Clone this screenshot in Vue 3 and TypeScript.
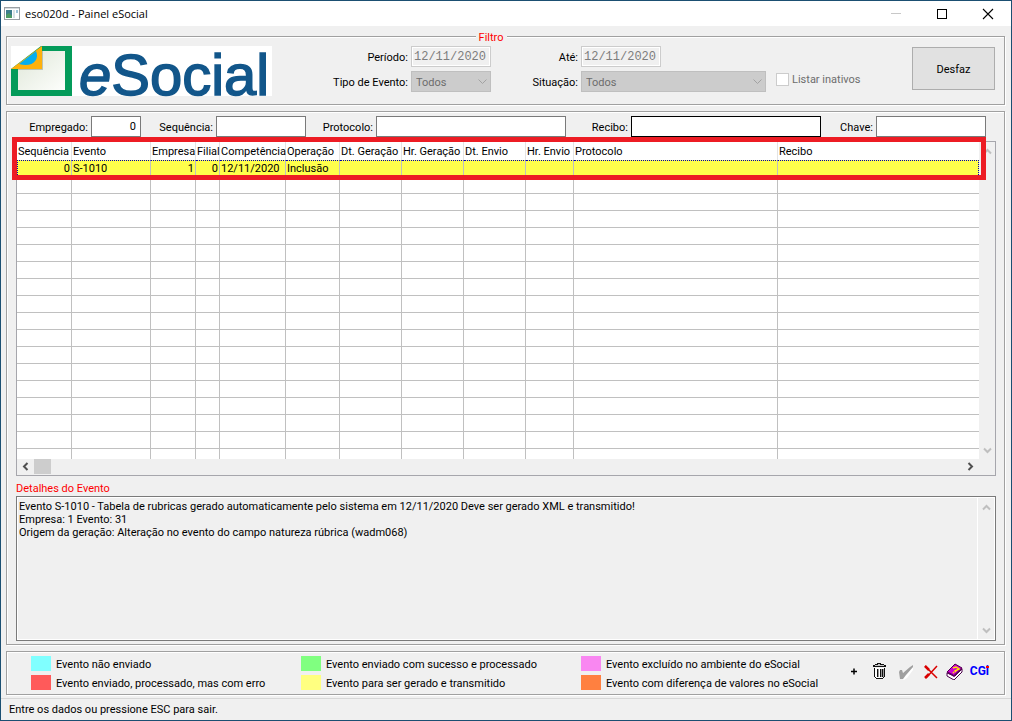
<script setup lang="ts">
import { ref } from 'vue'

interface Column {
  title: string
  width?: number
  numeric?: boolean
}

const columns: Column[] = [
  { title: 'Sequência', width: 55, numeric: true },
  { title: 'Evento', width: 79 },
  { title: 'Empresa', width: 45, numeric: true },
  { title: 'Filial', width: 24, numeric: true },
  { title: 'Competência', width: 66 },
  { title: 'Operação', width: 54 },
  { title: 'Dt. Geração', width: 62 },
  { title: 'Hr. Geração', width: 62 },
  { title: 'Dt. Envio', width: 62 },
  { title: 'Hr. Envio', width: 48 },
  { title: 'Protocolo', width: 204 },
  { title: 'Recibo' },
]

const row = ['0', 'S-1010', '1', '0', '12/11/2020', 'Inclusão', '', '', '', '', '', '']
const emptyRows = 17

const searchFields = ref([
  { id: 'empregado', label: 'Empregado:', value: '0' },
  { id: 'sequencia', label: 'Sequência:', value: '' },
  { id: 'protocolo', label: 'Protocolo:', value: '' },
  { id: 'recibo', label: 'Recibo:', value: '' },
  { id: 'chave', label: 'Chave:', value: '' },
])

const legend = [
  { name: 'cyan', text: 'Evento não enviado' },
  { name: 'green', text: 'Evento enviado com sucesso e processado' },
  { name: 'pink', text: 'Evento excluído no ambiente do eSocial' },
  { name: 'red', text: 'Evento enviado, processado, mas com erro' },
  { name: 'yellow', text: 'Evento para ser gerado e transmitido' },
  { name: 'orange', text: 'Evento com diferença de valores no eSocial' },
]

const details = `Evento S-1010 - Tabela de rubricas gerado automaticamente pelo sistema em 12/11/2020 Deve ser gerado XML e transmitido!
Empresa: 1 Evento: 31
Origem da geração: Alteração no evento do campo natureza rúbrica (wadm068)`
</script>

<template>
  <div class="window">
    <header class="titlebar">
      <svg class="app-icon" width="16" height="13" viewBox="0 0 16 13">
        <rect x="0.5" y="0.5" width="15" height="12" fill="#fff" stroke="#9a9fa3" />
        <rect x="1" y="1" width="14" height="1" fill="#d5dadd" />
        <rect x="2" y="3" width="6" height="8" fill="#3e7d8c" />
        <path d="M2 11V8l3-2 3 3v2z" fill="#4c9a62" />
        <rect x="9" y="3" width="2" height="8" fill="#d9e2e6" />
        <rect x="12" y="3" width="2" height="3" fill="#9cc4da" />
      </svg>
      <h1>eso020d - Painel eSocial</h1>
      <div class="window-buttons">
        <button type="button" aria-label="Minimizar">
          <svg width="12" height="12"><path d="M1 5.500h10" stroke="#c8c8c8" /></svg>
        </button>
        <button type="button" aria-label="Maximizar">
          <svg width="12" height="12"><rect x="1.500" y="1.500" width="9" height="9" fill="none" stroke="#000" /></svg>
        </button>
        <button type="button" aria-label="Fechar">
          <svg width="12" height="12"><path d="M1 1l10 10M11 1L1 11" stroke="#000" stroke-width="1.100" /></svg>
        </button>
      </div>
    </header>

    <main>
      <section class="panel filter" aria-labelledby="filter-title">
        <h2 id="filter-title">Filtro</h2>
        <svg class="logo" width="261" height="50" viewBox="0 0 261 50" role="img" aria-label="eSocial">
          <rect width="261" height="50" fill="#fff" />
          <defs>
            <linearGradient id="sheet" x1="0" y1="0" x2="1" y2="1">
              <stop offset="0" stop-color="#dfe7d8" />
              <stop offset="1" stop-color="#fdfefc" />
            </linearGradient>
          </defs>
          <path d="M30 0H61V50H0V23z" fill="#049b5a" />
          <path d="M31 5H54V44H7V23H31z" fill="url(#sheet)" />
          <path d="M31 0V23H0z" fill="#fdb10d" />
          <path d="M8 18L25 5C29 14 21 22 8 18z" fill="#04aeef" />
          <path d="M31.500 5V23.500H7" fill="none" stroke="#8b927d" stroke-width="1" opacity="0.500" />
          <text x="68" y="49" class="logo-text"><tspan font-style="italic">e</tspan>Social</text>
        </svg>

        <div class="filter-fields">
          <label for="periodo">Período:</label>
          <input id="periodo" class="date" type="text" value="12/11/2020" disabled />
          <label for="ate">Até:</label>
          <input id="ate" class="date" type="text" value="12/11/2020" disabled />

          <label for="tipo">Tipo de Evento:</label>
          <div class="select">
            <select id="tipo" disabled><option>Todos</option></select>
            <svg width="9" height="6"><path d="M0.500 0.500l4 4 4-4" fill="none" stroke="#a2a2a2" /></svg>
          </div>
          <label for="situacao">Situação:</label>
          <div class="select wide">
            <select id="situacao" disabled><option>Todos</option></select>
            <svg width="9" height="6"><path d="M0.500 0.500l4 4 4-4" fill="none" stroke="#a2a2a2" /></svg>
          </div>
        </div>

        <label class="check"><input type="checkbox" disabled />Listar inativos</label>
        <button type="button" class="undo">Desfaz</button>
      </section>

      <section class="panel events">
        <div class="search">
          <template v-for="field in searchFields" :key="field.id">
            <label :for="field.id">{{ field.label }}</label>
            <input :id="field.id" v-model="field.value" :class="field.id" type="text" />
          </template>
        </div>

        <div class="grid-area">
          <div class="grid-box">
            <div class="grid-view">
              <table>
                <colgroup>
                  <col v-for="c in columns" :key="c.title" :style="{ width: c.width ? c.width + 'px' : 'auto' }" />
                </colgroup>
                <thead>
                  <tr><th v-for="c in columns" :key="c.title" scope="col">{{ c.title }}</th></tr>
                </thead>
                <tbody>
                  <tr class="selected">
                    <td v-for="(c, i) in columns" :key="c.title" :class="{ numeric: c.numeric }">{{ row[i] }}</td>
                  </tr>
                  <tr v-for="n in emptyRows" :key="n">
                    <td v-for="c in columns" :key="c.title"></td>
                  </tr>
                </tbody>
              </table>
            </div>
            <div class="vbar">
              <button type="button" aria-label="Acima"><svg width="9" height="7"><path d="M1 5.500L4.500 2 8 5.500" class="dim" /></svg></button>
              <button type="button" aria-label="Abaixo"><svg width="9" height="7"><path d="M1 1.500L4.500 5 8 1.500" class="dim" /></svg></button>
            </div>
            <div class="hbar">
              <button type="button" aria-label="Esquerda"><svg width="7" height="9"><path d="M5.500 1L2 4.500 5.500 8" class="dark" /></svg></button>
              <span class="thumb"></span>
              <button type="button" class="right" aria-label="Direita"><svg width="7" height="9"><path d="M1.500 1L5 4.500 1.500 8" class="dark" /></svg></button>
            </div>
          </div>
          <div class="highlight"></div>
        </div>

        <label class="details-title" for="detalhes">Detalhes do Evento</label>
        <div class="details">
          <textarea id="detalhes" readonly :value="details"></textarea>
          <div class="vbar">
            <button type="button" aria-label="Rolar acima"><svg width="9" height="7"><path d="M1 5.500L4.500 2 8 5.500" class="dim" /></svg></button>
            <button type="button" aria-label="Rolar abaixo"><svg width="9" height="7"><path d="M1 1.500L4.500 5 8 1.500" class="dim" /></svg></button>
          </div>
        </div>
      </section>

      <section class="panel footer">
        <ul class="legend">
          <li v-for="item in legend" :key="item.name"><span class="swatch" :class="item.name"></span><span class="caption">{{ item.text }}</span></li>
        </ul>
        <div class="tools">
          <button type="button" aria-label="Incluir">
            <svg width="18" height="18"><path d="M6 9.500h6M9 6.500v6" stroke="#000" stroke-width="1.500" /></svg>
          </button>
          <button type="button" aria-label="Excluir">
            <svg width="18" height="18" viewBox="0 0 18 18" shape-rendering="crispEdges">
              <path d="M4 6h10v9h-1v2H5v-2H4z" fill="#fff" />
              <path d="M7 1h4v1h3v1h2v2H3V3h2V2h2z" fill="#111" />
              <path d="M5 3h9v1H5zM8 2h2v1H8z" fill="#c8c8c8" />
              <path d="M4 6h1v9H4zM14 6h1v9h-1zM5 15h1v1H5zM13 15h1v1h-1zM6 16h7v1H6zM7 7h1v8H7zM10 7h1v8h-1zM12 7h1v8h-1z" fill="#111" />
              <path d="M8 7h1v8H8zM11 7h1v8h-1zM13 7h1v8h-1z" fill="#999" />
            </svg>
          </button>
          <button type="button" aria-label="Confirmar">
            <svg width="18" height="18" viewBox="-3 0 18 18">
              <path d="M6 18l-2-1-1-7h2l3 3 7-8v3l-6 8z" fill="#fff" />
              <path d="M1 10l1-2h2l1 3 7-6 3-2v2L8 13l-3 4H2z" fill="#a0a0a0" />
            </svg>
          </button>
          <button type="button" aria-label="Cancelar">
            <svg width="18" height="18" viewBox="-2 0 18 18">
              <path d="M3 4l12 12M15 4L4 16" stroke="#d90000" stroke-width="1.500" fill="none" />
              <path d="M3 4l4 4M3 16l4-4" stroke="#d90000" stroke-width="2.500" />
            </svg>
          </button>
          <button type="button" aria-label="Ajuda">
            <svg width="18" height="18" viewBox="-1 0 18 18">
              <path d="M1 11v3l7 4 8-8V7L9 14z" fill="#fff" stroke="#4a004a" stroke-width="1" />
              <path d="M1 10L9 2l7 4-8 8z" fill="#d000d0" stroke="#500050" stroke-width="1" />
              <path d="M1 10l7 4 8-8" fill="none" stroke="#600060" stroke-width="1.500" />
              <path d="M7 6l3-1 3 2-4 2 1 1M7 10l1 1" fill="none" stroke="#ffe600" stroke-width="1.500" />
            </svg>
          </button>
          <button type="button" class="cgi">CGi</button>
        </div>
      </section>
    </main>

    <footer class="status">Entre os dados ou pressione ESC para sair.</footer>
  </div>
</template>

<style>
body {
  margin: 0;
  background: #f0f0f0;
}
</style>

<style scoped>
* {
  box-sizing: border-box;
}

.window {
  display: flex;
  flex-direction: column;
  min-height: 100vh;
  border: 1px solid #1b4f72;
  background: #f0f0f0;
  color: #000;
  font: 11px/13px Roboto, "Liberation Sans", sans-serif;
}

input,
select,
textarea,
button {
  margin: 0;
  font: inherit;
  color: inherit;
  border-radius: 0;
}

button {
  display: flex;
  align-items: center;
  justify-content: center;
  padding: 0;
  border: 0;
  background: none;
}

/* Title bar */
.titlebar {
  display: flex;
  align-items: center;
  height: 25px;
  padding-left: 3px;
  background: #fff;
}

.titlebar h1 {
  flex: 1;
  margin: 0 0 0 5px;
  font: 400 11px/16px "Open Sans", "Noto Sans", sans-serif;
}

.window-buttons {
  display: flex;
}

.window-buttons button {
  width: 46px;
  height: 25px;
}

main {
  flex: 1;
  display: flex;
  flex-direction: column;
  gap: 6px;
  padding: 10px 6px 3px 5px;
}

.panel {
  border: 1px solid #a0a0a0;
  box-shadow: 1px 1px 0 #fff, inset 1px 1px 0 #fff;
}

/* Filter */
.filter {
  position: relative;
  display: flex;
  align-items: flex-start;
  height: 69px;
  padding: 9px 9px 0 4px;
}

.filter h2 {
  position: absolute;
  top: -6px;
  left: 47%;
  margin: 0;
  padding: 0 3px;
  background: #f0f0f0;
  color: #f00;
  font: inherit;
}

.logo {
  flex: none;
  overflow: visible;
}

.logo-text {
  font: 58px "Liberation Sans", Arial, sans-serif;
  fill: #12568a;
  stroke: #12568a;
  stroke-width: 1.5px;
}

.filter-fields {
  display: grid;
  grid-template-columns: 136px 80px 84px 185px;
  column-gap: 3px;
  row-gap: 4px;
  align-items: center;
}

.filter-fields label {
  padding-top: 1px;
  text-align: right;
}

.date {
  width: 80px;
  height: 21px;
  padding: 0 2px;
  border: 1px solid #ccc;
  background: #f0f0f0;
  color: #7d7d7d;
  font: 12px "Liberation Mono", monospace;
  box-shadow: inset 1px 1px 0 #fff, inset -1px -1px 0 #fff;
}

.select {
  position: relative;
  height: 21px;
}

.select select {
  display: block;
  width: 100%;
  height: 21px;
  padding: 1px 4px 0;
  border: 1px solid #bfbfbf;
  background: #ccc;
  color: #6d6d6d;
  opacity: 1;
  appearance: none;
}

.select svg {
  position: absolute;
  right: 4px;
  top: 8px;
}

.check {
  display: flex;
  align-items: center;
  gap: 3px;
  margin: 27px auto 0 10px;
  color: #6d6d6d;
}

.check input {
  width: 13px;
  height: 13px;
  appearance: none;
  border: 1px solid #ccc;
  background: #fff;
}

.undo {
  width: 83px;
  height: 43px;
  margin-top: 1px;
  padding-top: 1px;
  border: 1px solid #adadad;
  background: #e1e1e1;
}

/* Events */
.events {
  flex: 1;
  display: flex;
  flex-direction: column;
  padding-bottom: 3px;
}

.search {
  display: grid;
  grid-template-columns: 81px 50fr 69px 90fr 64px 190fr 59px 190fr 49px 110fr;
  column-gap: 3px;
  align-items: center;
  padding: 4px 18px 0 0;
}

.search label {
  padding-top: 1px;
  text-align: right;
}

.search input {
  width: 100%;
  min-width: 0;
  height: 21px;
  padding: 0 4px;
  border: 1px solid #7a7a7a;
  background: #fff;
}

.search .empregado {
  text-align: right;
}

.search .recibo {
  border-color: #000;
}

.grid-area {
  position: relative;
  margin: 4px 8px 0 9px;
}

.grid-box {
  display: grid;
  grid-template-columns: 1fr 16px;
  grid-template-rows: 317px 16px;
  border: 1px solid #a6a6ac;
}

.grid-view {
  overflow: hidden;
  background: #fff;
}

table {
  width: 100%;
  table-layout: fixed;
  border-collapse: separate;
  border-spacing: 0;
}

th,
td {
  height: 17px;
  padding: 0 1px;
  border-right: 1px solid #c0c0c0;
  border-bottom: 1px solid #c0c0c0;
  text-align: left;
  font-weight: 400;
  line-height: 15px;
  white-space: nowrap;
}

th {
  height: 18px;
  padding-top: 1px;
  border-right-color: #e3e3e3;
  border-bottom: 0;
}

th:last-child,
td:last-child {
  border-right: 0;
}

.numeric {
  text-align: right;
}

.selected td {
  border-top: 1px dotted #0000b4;
  background: #ffff4b;
  vertical-align: top;
}

.selected td:first-child {
  border-left: 1px dotted #0000b4;
}

.selected td:last-child {
  border-right: 1px dotted #0000b4;
}

.highlight {
  position: absolute;
  top: -4px;
  left: -4px;
  right: 10px;
  height: 43px;
  border: 5px solid #ed1c24;
  pointer-events: none;
}

.vbar {
  display: flex;
  flex-direction: column;
  justify-content: space-between;
  background: #f0f0f0;
}

.vbar button {
  height: 18px;
}

.hbar {
  display: flex;
  background: #f0f0f0;
}

.hbar button {
  width: 17px;
  height: 15px;
}

.hbar .right {
  margin-left: auto;
}

.thumb {
  width: 17px;
  height: 15px;
  background: #cdcdcd;
}

.dim,
.dark {
  fill: none;
  stroke: #bfbfbf;
  stroke-width: 2;
}

.dark {
  stroke: #505050;
}

.details-title {
  margin: 6px 9px 1px;
  color: #f00;
}

.details {
  flex: 1;
  display: flex;
  margin: 0 8px 0 9px;
  border: 1px solid #7a7a7a;
  box-shadow: inset 0 0 0 1px #fff;
  padding: 1px;
}

.details textarea {
  flex: 1;
  padding: 2px 1px;
  border: 0;
  border-right: 1px solid #fff;
  background: #f0f0f0;
  resize: none;
  overflow: hidden;
  outline: 0;
}

.details .vbar {
  width: 16px;
}

/* Legend and tools */
.footer {
  display: flex;
  justify-content: space-between;
  height: 44px;
  padding: 4px 15px 0 24px;
}

.legend {
  display: grid;
  grid-template-columns: 270px 280px auto;
  grid-auto-rows: 15px;
  row-gap: 4px;
  margin: 0;
  padding: 0;
  list-style: none;
  white-space: nowrap;
}

.legend li {
  display: flex;
  align-items: center;
  gap: 5px;
}

.caption {
  padding-top: 2px;
}

.swatch {
  width: 20px;
  height: 15px;
}

.cyan { background: #80ffff; }
.green { background: #80ff80; }
.pink { background: #f987f1; }
.red { background: #ff5a5a; }
.yellow { background: #ffff80; }
.orange { background: #ff8040; }

.tools {
  display: flex;
  gap: 7px;
  height: 30px;
  align-items: center;
}

.tools .cgi {
  position: relative;
  color: #00f;
  font: 700 12px/16px Roboto, "Liberation Sans", sans-serif;
}

.cgi::after {
  content: "";
  position: absolute;
  top: 3px;
  right: 0;
  width: 3px;
  height: 2px;
  background: #f00;
}

.status {
  height: 22px;
  padding: 4px 8px 0;
  border-top: 1px solid #d7d7d7;
}
</style>
